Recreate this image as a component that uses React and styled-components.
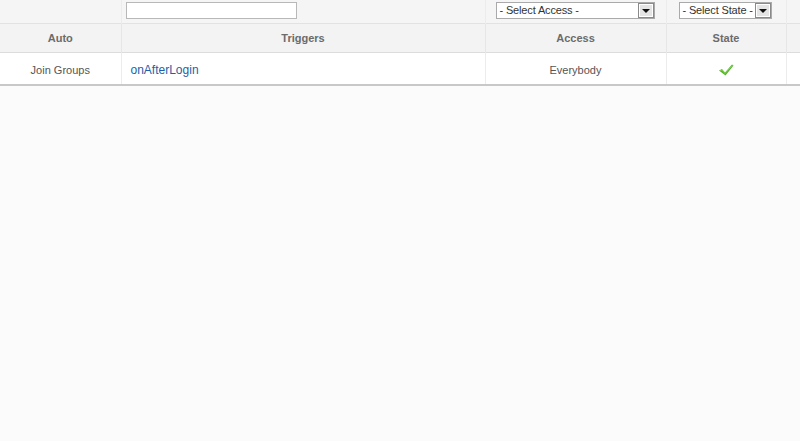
import React from "react";
import styled, { createGlobalStyle } from "styled-components";

const Global = createGlobalStyle`
  html, body { margin: 0; padding: 0; background: #fbfbfb; }
  body { font-family: "Liberation Sans", Arial, sans-serif; }
`;

const Page = styled.div`
  width: 800px;
  height: 441px;
  background: #fbfbfb;
`;

const Table = styled.table`
  width: 800px;
  border-collapse: collapse;
  table-layout: fixed;
`;

const FilterRow = styled.tr`
  height: 23px;
  background: #f5f5f5;
  border-bottom: 1px solid #e2e2e2;
`;

const FilterCell = styled.td`
  padding: 2px 0 0 ${p => p.$pl || 0}px;
  border-right: 1px solid #ececec;
  vertical-align: top;
  &:last-child { border-right: none; }
`;

const HeadRow = styled.tr`
  height: 29px;
  background: #f3f3f3;
  border-bottom: 1px solid #dcdcdc;
`;

const Th = styled.th`
  font-size: 11px;
  font-weight: bold;
  color: #6b6b6b;
  text-align: center;
  border-right: 1px solid #e6e6e6;
  padding: 0;
  &:last-child { border-right: none; }
`;

const BodyRow = styled.tr`
  height: 33px;
  background: #fff;
  border-bottom: 2px solid #c8c8c8;
`;

const Td = styled.td`
  font-size: 11px;
  color: #555;
  text-align: ${p => p.$align || "center"};
  padding: 3px 0 0 ${p => p.$pl || 0}px;
  border-right: 1px solid #ececec;
  &:last-child { border-right: none; }
`;

const Link = styled.a`
  color: #1d5fa8;
  font-size: 12px;
  text-decoration: none;
`;

const SearchInput = styled.div`
  width: 169px;
  height: 15px;
  border: 1px solid #b8b8b8;
  background: #fff;
`;

const Select = styled.div`
  display: flex;
  align-items: stretch;
  width: ${p => p.$w}px;
  height: 17px;
  border: 1px solid #aaa;
  background: #fff;
  box-sizing: border-box;
  font-size: 11px;
  color: #333;
  margin-left: ${p => p.$ml || 0}px;
`;

const SelectLabel = styled.span`
  flex: 1;
  line-height: 15px;
  padding-left: 3px;
  white-space: nowrap;
  letter-spacing: -0.15px;
`;

const Arrow = styled.span`
  flex-shrink: 0;
  width: 12px;
  background: #e4e4e4;
  border: 1px solid #fff;
  outline: 1px solid #8a8a8a;
  margin: 1px 1px 1px 0;
  display: flex;
  align-items: center;
  justify-content: center;
  &::after {
    content: "";
    border-left: 4px solid transparent;
    border-right: 4px solid transparent;
    border-top: 4px solid #111;
    margin-top: 1px;
  }
`;

const Check = () => (
  <svg width="16" height="14" viewBox="0 0 16 14" style={{ marginTop: 2 }}>
    <path d="M1 7.5 L4 6 L7 9.5 L14 1.5 L15.5 2.5 L7.5 12.5 Z" fill="#52b52a" />
    <path d="M2 7.8 L4 7 L7 10.5 L14.5 2.2" stroke="#8fd45a" strokeWidth="0.8" fill="none" />
  </svg>
);

export default function App() {
  return (
    <>
      <Global />
      <Page>
        <Table>
          <colgroup>
            <col style={{ width: 121 }} />
            <col style={{ width: 364 }} />
            <col style={{ width: 181 }} />
            <col style={{ width: 120 }} />
            <col style={{ width: 14 }} />
          </colgroup>
          <tbody>
            <FilterRow>
              <FilterCell />
              <FilterCell $pl={4}><SearchInput /></FilterCell>
              <FilterCell><Select $w={159} $ml={10}><SelectLabel>- Select Access -</SelectLabel><Arrow /></Select></FilterCell>
              <FilterCell><Select $w={93} $ml={12}><SelectLabel>- Select State -</SelectLabel><Arrow /></Select></FilterCell>
              <FilterCell />
            </FilterRow>
            <HeadRow>
              <Th>Auto</Th>
              <Th>Triggers</Th>
              <Th>Access</Th>
              <Th>State</Th>
              <Th />
            </HeadRow>
            <BodyRow>
              <Td>Join Groups</Td>
              <Td $align="left" $pl={9}><Link href="#">onAfterLogin</Link></Td>
              <Td>Everybody</Td>
              <Td><Check /></Td>
              <Td />
            </BodyRow>
          </tbody>
        </Table>
      </Page>
    </>
  );
}
